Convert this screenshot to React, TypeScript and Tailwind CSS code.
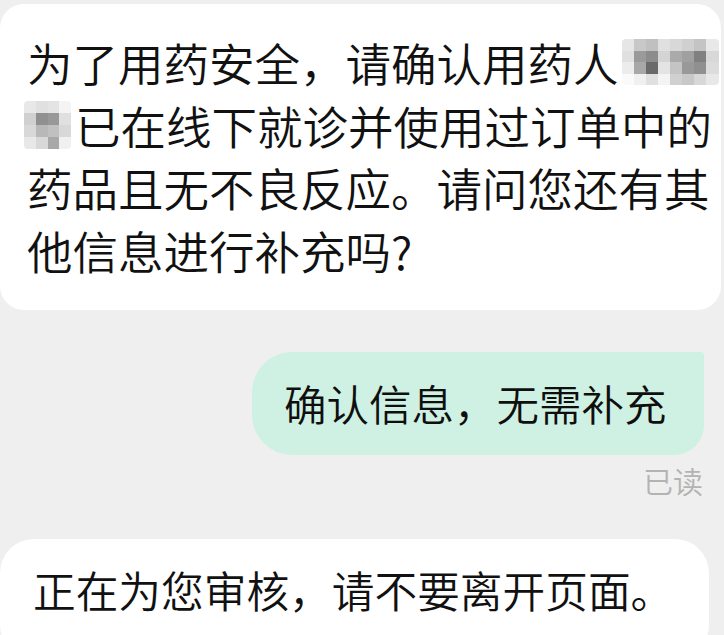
const cjk = { fontFamily: '"Noto Sans CJK SC", "Noto Sans", sans-serif' };

// pixelated name mosaic, cells are grey values
const mosaicWide = [
  ["#e6e6e6", "#c8c8c8", "#c0c0c0", "#e0e0e0", "#d8d8d8", "#d0d0d0", "#c4c4c4", "#e8e8e8"],
  ["#e0e0e0", "#9a9a9a", "#8c8c8c", "#d4d4d4", "#aaaaaa", "#a0a0a0", "#808080", "#d8d8d8"],
  ["#ececec", "#a8a8a8", "#6a6a6a", "#e4e4e4", "#c4c4c4", "#999999", "#909090", "#dcdcdc"],
  ["#fafafa", "#f0f0f0", "#e0e0e0", "#f4f4f4", "#d0d0d0", "#c8c8c8", "#d8d8d8", "#e8e8e8"],
];

const mosaicSmall = [
  ["#e8e8e8", "#e0e0e0", "#e4e4e4", "#f4f4f4"],
  ["#d0d0d0", "#909090", "#989898", "#e0e0e0"],
  ["#d8d8d8", "#b8b8b8", "#c0c0c0", "#d8d8d8"],
  ["#e8e8e8", "#d8d8d8", "#a8a8a8", "#f0f0f0"],
];

function Mosaic({ cells, className }: { cells: string[][]; className: string }) {
  return (
    <span className={`inline-flex flex-col overflow-hidden rounded-[4px] align-middle ${className}`}>
      {cells.map((row, r) => (
        <span key={r} className="flex flex-1">
          {row.map((c, i) => (
            <span key={i} className="flex-1" style={{ backgroundColor: c }} />
          ))}
        </span>
      ))}
    </span>
  );
}

export default function App() {
  return (
    <div className="flex h-[635px] w-[724px] flex-col overflow-hidden bg-[#efefef] pt-[4px] font-[350]" style={cjk}>
      <div className="h-[306px] w-[721px] shrink-0 rounded-[24px] bg-white pl-[27px] pt-[27px] text-[45.5px] leading-[62.5px] text-[#111]">
        <div className="flex items-center whitespace-nowrap">
          <span>为了用药安全，请确认用药人</span>
          <Mosaic cells={mosaicWide} className="ml-[3px] h-[46px] w-[97px]" />
        </div>
        <div className="flex items-center whitespace-nowrap">
          <Mosaic cells={mosaicSmall} className="-ml-[3px] mr-[4px] h-[48px] w-[47px]" />
          <span>已在线下就诊并使用过订单中的</span>
        </div>
        <div className="whitespace-nowrap">药品且无不良反应。请问您还有其</div>
        <div className="whitespace-nowrap">他信息进行补充吗?</div>
      </div>

      <div className="ml-[252px] mt-[42px] flex h-[103px] w-[452px] shrink-0 items-center rounded-tl-[40px] rounded-bl-[40px] rounded-tr-[4px] rounded-br-[30px] bg-[#cff1e3] pl-[32px] text-[42.5px] leading-none text-[#0f0f0f]">
        确认信息，无需补充
      </div>

      <div className="mr-[21px] mt-[10px] self-end text-[30px] leading-[30px] text-[#b3b3b3]">已读</div>

      <div className="mt-[44px] h-[120px] w-[709px] shrink-0 rounded-[34px] bg-white pl-[33px] pt-[29px] text-[42.7px] leading-[42px] text-[#111]">
        正在为您审核，请不要离开页面。
      </div>
    </div>
  );
}
